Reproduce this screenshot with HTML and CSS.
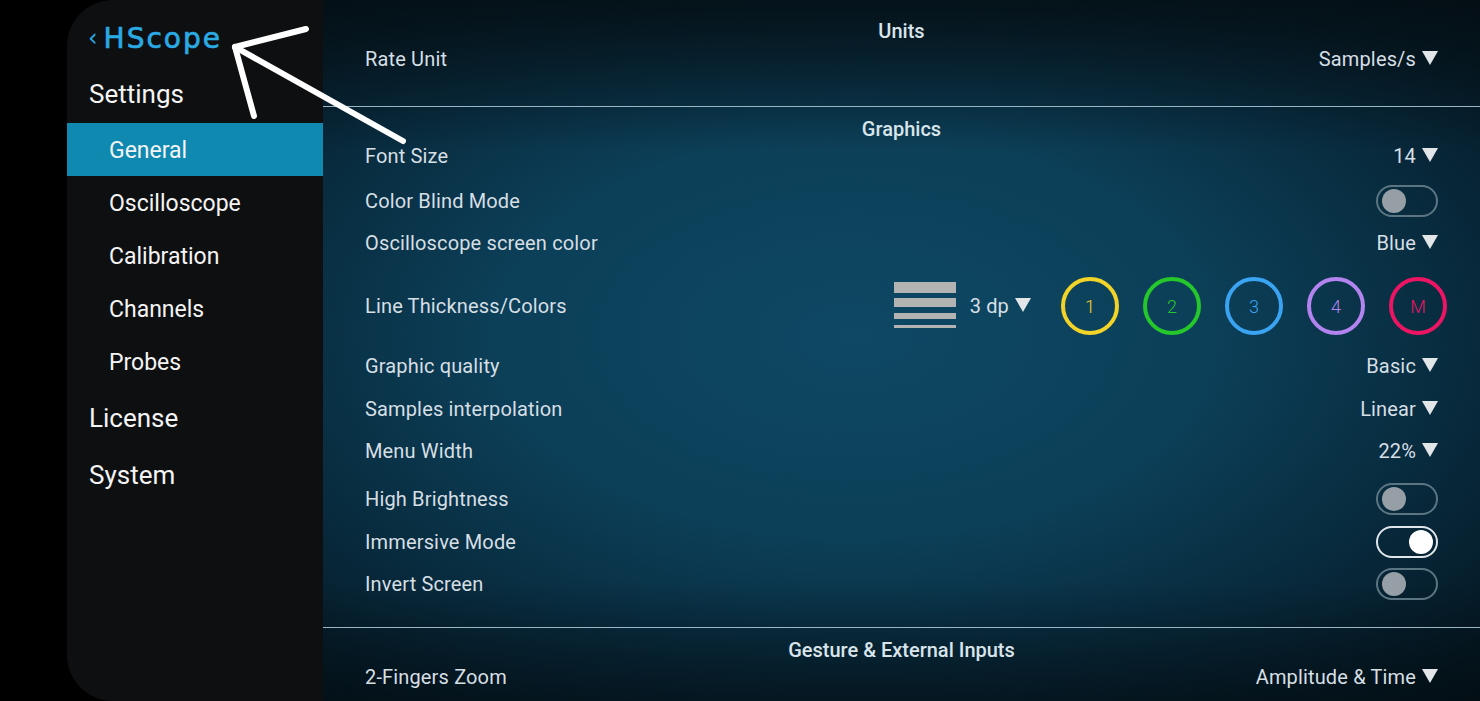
FILE: index.html
```html
<html>
<head>
    <title>HScope Settings</title>
    <link rel="stylesheet" href="styles.css">
</head>
<body>
    <div class="screen">
        <div class="edge"></div>
        <nav class="sidebar">
            <div class="brand"><span class="chev">&lsaquo;</span>HScope</div>
            <div class="group">Settings</div>
            <div class="item active">General</div>
            <div class="item">Oscilloscope</div>
            <div class="item">Calibration</div>
            <div class="item">Channels</div>
            <div class="item">Probes</div>
            <div class="group license">License</div>
            <div class="group">System</div>
        </nav>

        <main class="content">
            <section class="section units">
                <h2>Units</h2>
                <div class="row"><span>Rate Unit</span><span class="select">Samples/s</span></div>
            </section>

            <section class="section graphics">
                <h2>Graphics</h2>
                <div class="row"><span>Font Size</span><span class="select">14</span></div>
                <div class="row g15"><span>Color Blind Mode</span><span class="toggle"></span></div>
                <div class="row g12"><span>Oscilloscope screen color</span><span class="select">Blue</span></div>
                <div class="row tall g18">
                    <span>Line Thickness/Colors</span>
                    <div class="lines">
                        <svg class="thick" width="62" height="48" viewBox="0 0 62 48">
                            <rect x="0" y="0" width="62" height="11" fill="#b3b3b3"/>
                            <rect x="0" y="16" width="62" height="9" fill="#b3b3b3"/>
                            <rect x="0" y="31" width="62" height="6" fill="#b3b3b3"/>
                            <rect x="0" y="43" width="62" height="3" fill="#b3b3b3"/>
                        </svg>
                        <span class="select dp">3 dp</span>
                        <div class="swatches">
                            <span class="swatch ch1">1</span>
                            <span class="swatch ch2">2</span>
                            <span class="swatch ch3">3</span>
                            <span class="swatch ch4">4</span>
                            <span class="swatch chm">M</span>
                        </div>
                    </div>
                </div>
                <div class="row g15"><span>Graphic quality</span><span class="select">Basic</span></div>
                <div class="row g13"><span>Samples interpolation</span><span class="select">Linear</span></div>
                <div class="row g12"><span>Menu Width</span><span class="select">22%</span></div>
                <div class="row g18"><span>High Brightness</span><span class="toggle"></span></div>
                <div class="row g13"><span>Immersive Mode</span><span class="toggle on"></span></div>
                <div class="row g12"><span>Invert Screen</span><span class="toggle"></span></div>
            </section>

            <section class="section gestures">
                <h2>Gesture &amp; External Inputs</h2>
                <div class="row"><span>2-Fingers Zoom</span><span class="select">Amplitude &amp; Time</span></div>
            </section>
        </main>

        <!-- hand drawn pointer over the screenshot -->
        <svg class="annotation" width="1480" height="701" viewBox="0 0 1480 701">
            <g stroke="#ffffff" stroke-width="6" stroke-linecap="round" fill="none">
                <line x1="403" y1="141" x2="235" y2="47"/>
                <line x1="235" y1="47" x2="306" y2="29"/>
                <line x1="235" y1="47" x2="254" y2="116"/>
            </g>
        </svg>
    </div>
</body>
</html>
```

FILE: styles.css
```css
body {
    margin: 0;
    background-color: #000;
    font-family: Roboto, "Noto Sans", sans-serif;
    overflow: hidden;
}

.screen {
    position: relative;
    display: flex;
    width: 1480px;
    height: 701px;
    overflow: hidden;
}

.edge {
    width: 67px;
    flex-shrink: 0;
    background-color: #000;
}

/* left menu */

.sidebar {
    width: 256px;
    flex-shrink: 0;
    background-color: #0e0f11;
    border-radius: 46px 0 0 46px;
    padding-top: 11px;
    box-sizing: border-box;
    color: #f4f4f4;
}

.brand {
    height: 55px;
    line-height: 55px;
    padding-left: 21px;
    color: #2aa9e2;
    font-family: "DejaVu Sans", sans-serif;
    font-size: 28px;
    letter-spacing: 2px;
    -webkit-text-stroke: 0.7px #2aa9e2;
}

.brand .chev {
    font-size: 24px;
    margin-right: 4px;
    -webkit-text-stroke: 0;
    position: relative;
    top: -2px;
}

.group {
    height: 57px;
    line-height: 57px;
    padding-left: 22px;
    font-size: 26px;
}

.group.license {
    margin-top: 2px;
}

.item {
    height: 53px;
    line-height: 55px;
    padding-left: 42px;
    font-size: 23px;
}

.item.active {
    background-color: #1089b1;
}

/* settings panel */

.content {
    flex: 1;
    color: #d6dfe4;
    font-size: 20px;
    background:
        linear-gradient(to bottom, rgba(4, 14, 19, 0.85) 0px, rgba(4, 14, 19, 0) 150px),
        linear-gradient(to top, rgba(3, 12, 17, 0.6) 0px, rgba(3, 12, 17, 0) 120px),
        radial-gradient(ellipse 78% 72% at 46% 48%, #0e4864 0%, #0c3f58 40%, #072536 75%, #03121a 100%);
}

.section {
    padding: 0 42px;
}

.section h2 {
    margin: 0;
    height: 24px;
    line-height: 24px;
    text-align: center;
    font-size: 20px;
    font-weight: 500;
    color: #d9e5eb;
}

.units {
    padding-top: 19px;
    padding-bottom: 32px;
    border-bottom: 1px solid #9bb6c3;
}

.units .row {
    margin-top: 1px;
}

.graphics {
    padding-top: 10px;
    padding-bottom: 28px;
    border-bottom: 1px solid #9bb6c3;
}

.gestures {
    padding-top: 10px;
}

.row {
    display: flex;
    align-items: center;
    justify-content: space-between;
    height: 30px;
    letter-spacing: 0.15px;
}

.row.tall {
    height: 60px;
}

.g12 { margin-top: 12px; }
.g13 { margin-top: 13px; }
.g15 { margin-top: 15px; }
.g18 { margin-top: 18px; }

.select::after {
    content: "";
    display: inline-block;
    margin-left: 6px;
    border-left: 8px solid transparent;
    border-right: 8px solid transparent;
    border-top: 14px solid #e2e6e8;
    vertical-align: 1px;
}

.toggle {
    position: relative;
    width: 62px;
    height: 32px;
    border: 2px solid #5b7582;
    border-radius: 18px;
    box-sizing: border-box;
}

.toggle::after {
    content: "";
    position: absolute;
    left: 4px;
    top: 2px;
    width: 24px;
    height: 24px;
    border-radius: 50%;
    background-color: #959fa5;
}

.toggle.on {
    border-color: #dfe7eb;
}

.toggle.on::after {
    left: auto;
    right: 3px;
    background-color: #ffffff;
}

.lines {
    display: flex;
    align-items: center;
    margin-right: -9px;
}

.thick {
    margin-right: 14px;
}

.dp {
    margin-right: 30px;
}

.swatches {
    display: flex;
    gap: 24px;
}

.swatch {
    width: 58px;
    height: 58px;
    border: 4px solid;
    border-radius: 50%;
    box-sizing: border-box;
    display: flex;
    align-items: center;
    justify-content: center;
    font-size: 18px;
    font-weight: 300;
}

.ch1 { color: #f2d327; }
.ch2 { color: #25c72a; }
.ch3 { color: #3ba4f2; }
.ch4 { color: #b384ef; }
.chm { color: #ec1563; }

.annotation {
    position: absolute;
    left: 0;
    top: 0;
    pointer-events: none;
}
```
